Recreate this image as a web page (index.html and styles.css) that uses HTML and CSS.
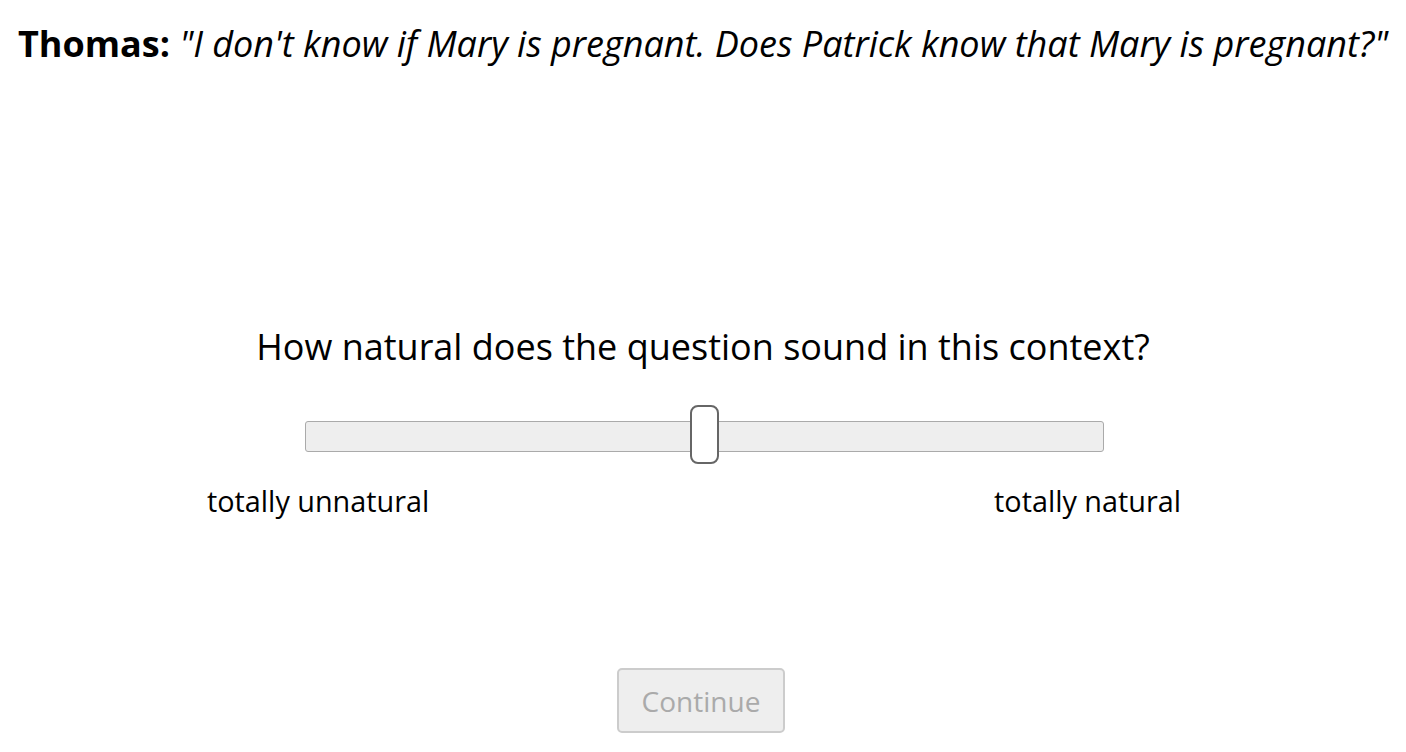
FILE: index.html
```html
<!DOCTYPE html>
<html>
<head>
<meta charset="utf-8">
<link rel="stylesheet" href="styles.css">
</head>
<body>
<div class="page">
  <p class="context"><b>Thomas:</b> <i>"I don't know if Mary is pregnant. Does Patrick know that Mary is pregnant?"</i></p>
  <p class="question">How natural does the question sound in this context?</p>
  <div class="slider-wrap">
    <div class="track">
      <span class="handle"></span>
    </div>
  </div>
  <div class="labels">
    <span class="label-left">totally unnatural</span>
    <span class="label-right">totally natural</span>
  </div>
  <div class="actions">
    <button class="continue" disabled>Continue</button>
  </div>
</div>
</body>
</html>
```
FILE: styles.css
```css
html, body {
  margin: 0;
  padding: 0;
  background: #fff;
}
body {
  font-family: "Open Sans", "Noto Sans", sans-serif;
  color: #000;
}
.page {
  display: flex;
  flex-direction: column;
  align-items: center;
}
.context {
  margin: 20px 0 0;
  font-size: 36px;
  line-height: 48px;
  text-align: center;
  white-space: nowrap;
}
.context b { font-weight: 700; }
.context i { font-style: italic; }
.question {
  margin: 255px 0 0;
  font-size: 36px;
  line-height: 48px;
}
.slider-wrap {
  margin-top: 50px;
  width: 799px;
  display: flex;
  justify-content: center;
  padding-left: 2px;
}
.track {
  position: relative;
  width: 797px;
  height: 29px;
  background: #eeeeee;
  border: 1px solid #aaaaaa;
  border-radius: 3px;
}
.handle {
  position: absolute;
  left: 384px;
  top: -17px;
  width: 25px;
  height: 55px;
  background: #fff;
  border: 2px solid #666;
  border-radius: 8px;
}
.labels {
  margin-top: 29px;
  width: 974px;
  padding-right: 18px;
  display: flex;
  justify-content: space-between;
  font-size: 28.8px;
  line-height: 40px;
}
.actions {
  margin-top: 147px;
  margin-right: 4px;
}
.continue {
  display: block;
  width: 168px;
  height: 65px;
  font-family: "Open Sans", sans-serif;
  font-size: 28px;
  color: #aaaaaa;
  background: #eeeeee;
  border: 2px solid #cccccc;
  border-radius: 5px;
  padding: 0;
}
```
